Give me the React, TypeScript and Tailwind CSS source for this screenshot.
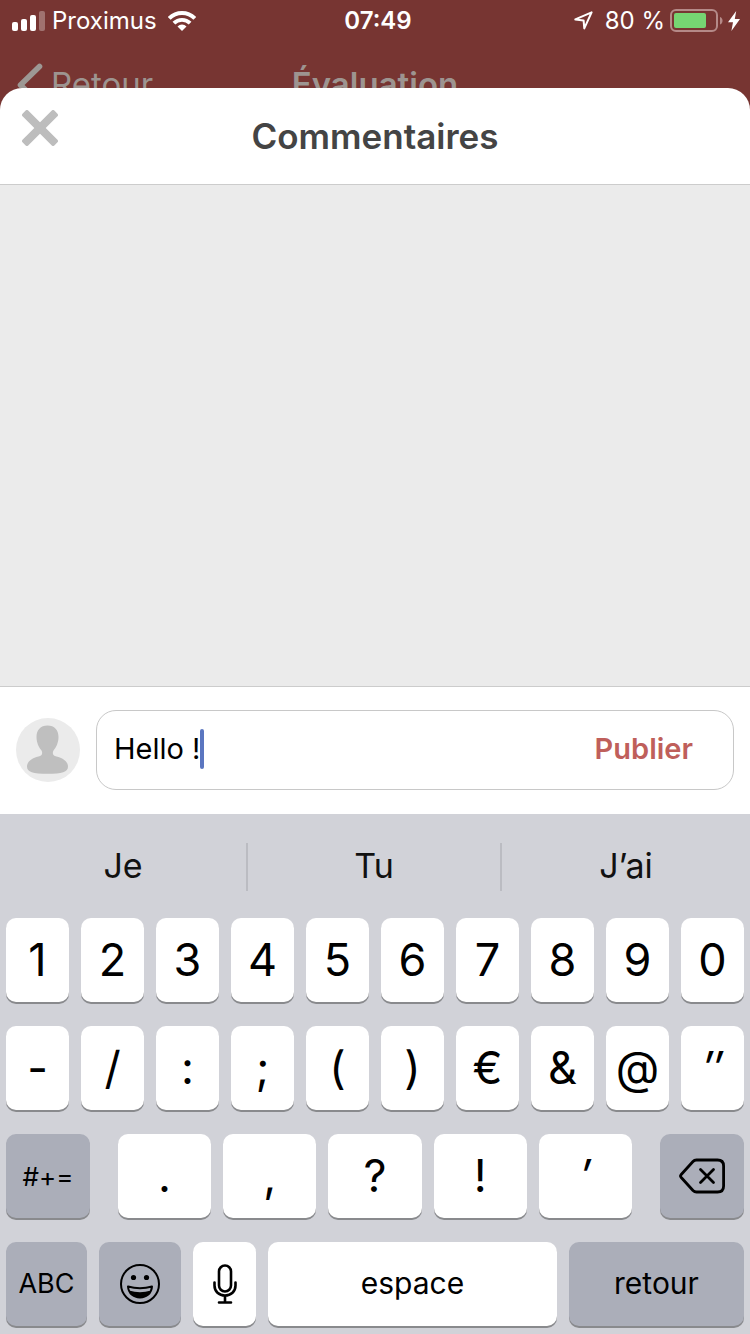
import { useState } from "react";
import type { ReactNode } from "react";

const NUMBER_ROW = ["1", "2", "3", "4", "5", "6", "7", "8", "9", "0"];
const SYMBOL_ROW = ["-", "/", ":", ";", "(", ")", "€", "&", "@", "″"];
const PUNCTUATION_ROW = [".", ",", "?", "!", "′"];
const SUGGESTIONS = ["Je", "Tu", "J’ai"];
const SLANTED = ["″", "′"];

function SignalIcon() {
  return (
    <svg width="33" height="20" viewBox="0 0 33 20" fill="white" aria-hidden="true">
      <rect x="0" y="11" width="6" height="9" rx="2" />
      <rect x="9" y="8" width="6" height="12" rx="2" />
      <rect x="18" y="4" width="6" height="16" rx="2" />
      <rect x="27" y="0" width="6" height="20" rx="2" opacity="0.3" />
    </svg>
  );
}

function WifiIcon() {
  return (
    <svg width="28" height="20" viewBox="0 0 28 20" fill="none" stroke="white" aria-hidden="true">
      <path d="M1.200 7.400a18 18 0 0 1 25.600 0" strokeWidth="4" />
      <path d="M5.900 12.200a11.400 11.400 0 0 1 16.200 0" strokeWidth="3.800" />
      <path d="M14 20l-4.500-4.500a6.200 6.200 0 0 1 9 0z" fill="white" stroke="none" />
    </svg>
  );
}

function LocationIcon() {
  return (
    <svg width="19" height="19" viewBox="0 0 19 19" fill="none" stroke="white" strokeWidth="2" strokeLinejoin="round" aria-hidden="true">
      <path d="M17.600 1.300L10.300 17.400 9.600 9.400 1.300 8.400z" />
    </svg>
  );
}

function BatteryIcon() {
  return (
    <svg width="53" height="24" viewBox="0 0 53 24" fill="none" aria-hidden="true">
      <rect x="1" y="1" width="46" height="21" rx="5" stroke="#b58a88" strokeWidth="2" />
      <rect x="4" y="4" width="32" height="15" rx="2" fill="#76d572" />
      <path d="M50 8c3.400 1 3.400 6.500 0 7.500z" fill="#b58a88" />
    </svg>
  );
}

function BoltIcon() {
  return (
    <svg width="12" height="20" viewBox="0 0 12 20" fill="white" aria-hidden="true">
      <path d="M8.200 0L0 11.300h5L3.400 20 12 8H6.800z" />
    </svg>
  );
}

function BackIcon() {
  return (
    <svg width="26" height="44" viewBox="0 0 26 44" fill="none" stroke="#9d9894" strokeWidth="5.600" strokeLinecap="round" strokeLinejoin="round" aria-hidden="true">
      <path d="M22.500 3.500L3.500 22l19 18.500" />
    </svg>
  );
}

function CloseIcon() {
  return (
    <svg width="36" height="36" viewBox="0 0 36 36" fill="#bdbdbd" aria-hidden="true">
      <rect x="-4.500" y="14" width="45" height="8" rx="1.800" transform="rotate(45 18 18)" />
      <rect x="-4.500" y="14" width="45" height="8" rx="1.800" transform="rotate(-45 18 18)" />
    </svg>
  );
}

function Avatar() {
  return (
    <svg className="shrink-0" width="64" height="64" viewBox="0 0 64 64" role="img" aria-label="Profil">
      <circle cx="32" cy="32" r="32" fill="#ebebeb" />
      <path
        fill="#bfbfbf"
        d="M31.500 7.500c7 0 11 4.500 11 11.500 0 6-2.500 10.500-5 13.500-1.500 3-.500 5 3 6 7 1.500 11.500 5.500 11.500 10 0 5.500-6 7.300-20.500 7.300S11 54 11 48.500c0-4.500 4.500-8.500 11.500-10 3.500-1 4.500-3 3-6-2.500-3-5-7.500-5-13.500 0-7 4-11.500 11-11.500z"
      />
    </svg>
  );
}

function BackspaceIcon() {
  return (
    <svg width="46" height="36" viewBox="0 0 46 36" fill="none" stroke="black" strokeWidth="2.800" strokeLinecap="round" strokeLinejoin="round" aria-hidden="true">
      <path d="M17.500 2H38.500Q44.600 2 44.600 8V28Q44.600 34 38.500 34H17.500Q15.500 34 14 32.500L2 19.200Q1 18 2 16.800L14 3.500Q15.300 2 17.500 2z" />
      <path d="M21.500 11.500l13 13M34.500 11.500l-13 13" />
    </svg>
  );
}

function EmojiIcon() {
  return (
    <svg width="40" height="40" viewBox="0 0 40 40" fill="none" stroke="black" strokeWidth="2" aria-hidden="true">
      <circle cx="20" cy="20" r="19" />
      <circle cx="13.500" cy="13.500" r="2.600" fill="black" stroke="none" />
      <circle cx="26.500" cy="13.500" r="2.600" fill="black" stroke="none" />
      <path d="M8 22.500Q20 26 32 22.500C31.500 29.500 26.500 33.500 20 33.500S8.500 29.500 8 22.500z" strokeLinejoin="round" />
      <path d="M9 26.500Q20 30 31 26.500C29.500 31.500 25.500 33.500 20 33.500S10.500 31.500 9 26.500z" fill="black" stroke="none" />
    </svg>
  );
}

function MicIcon() {
  return (
    <svg width="24" height="40" viewBox="0 0 24 40" fill="none" stroke="black" strokeWidth="2.600" strokeLinecap="round" aria-hidden="true">
      <rect x="6" y="1.500" width="12" height="26" rx="6" />
      <path d="M1.500 18.500v3c0 6 4.500 10 10.500 10s10.500-4 10.500-10v-3M12 31.500v7M6 38.500h12" />
    </svg>
  );
}

type KeyProps = {
  children: ReactNode;
  label?: string;
  className: string;
  onPress?: () => void;
};

function Key({ children, label, className, onPress }: KeyProps) {
  return (
    <button
      type="button"
      aria-label={label}
      onClick={onPress}
      className={`flex h-[84px] items-center justify-center rounded-[10px] text-black shadow-[0_2px_0_#898a8d] ${className}`}
    >
      {children}
    </button>
  );
}

function CharKey({ char, onPress }: { char: string; onPress: () => void }) {
  return (
    <Key
      className={SLANTED.includes(char) ? "bg-white text-[45px] italic" : "bg-white text-[45px]"}
      onPress={onPress}
    >
      {char}
    </Key>
  );
}

export default function App() {
  const [comment, setComment] = useState("Hello !");
  const append = (text: string) => setComment((current) => current + text);

  return (
    <div className="flex min-h-screen flex-col bg-[#773532] font-['Inter','Liberation_Sans',sans-serif]">
      <header className="flex h-22 flex-col overflow-hidden">
        <div className="grid h-[41px] shrink-0 grid-cols-[1fr_auto_1fr] items-center pr-2.5 pl-3 text-2xl text-white">
          <div className="flex items-center gap-[7px]">
            <SignalIcon />
            <span>Proximus</span>
            <span className="pl-1">
              <WifiIcon />
            </span>
          </div>
          <time className="pl-1 font-semibold">07:49</time>
          <div className="flex items-center justify-end gap-[5px]">
            <LocationIcon />
            <span className="pl-[7px]">80 %</span>
            <BatteryIcon />
            <BoltIcon />
          </div>
        </div>
        <nav className="grid h-22 shrink-0 grid-cols-[1fr_auto_1fr] items-center px-[17px] text-[33px] text-[#9d9490]">
          <a href="#retour" className="flex items-center gap-2">
            <BackIcon />
            Retour
          </a>
          <span className="font-semibold">Évaluation</span>
        </nav>
      </header>

      <main className="flex grow flex-col overflow-hidden rounded-t-[22px] bg-white">
        <div className="grid h-[97px] grid-cols-[1fr_auto_1fr] items-center border-b border-[#cccccc] px-5">
          <button type="button" aria-label="Fermer" className="mb-4 justify-self-start px-0.5">
            <CloseIcon />
          </button>
          <h1 className="text-[35px] font-semibold text-[#444444]">Commentaires</h1>
        </div>
        <div className="grow bg-[#ebebeb]" />
        <form
          className="flex items-center gap-4 border-t border-[#cccccc] px-4 py-6 pt-[23px]"
          onSubmit={(event) => event.preventDefault()}
        >
          <Avatar />
          <div className="flex h-20 grow items-center rounded-[20px] border border-[#c8c8c8] pr-10 pb-0.5 pl-[17px]">
            <input
              type="text"
              aria-label="Commentaire"
              value={comment}
              onChange={(event) => setComment(event.target.value)}
              className="field-sizing-content max-w-[440px] text-[29px] text-black caret-transparent outline-none"
            />
            <span className="h-10 w-1 rounded-full bg-[#5b76c0]" />
            <button type="submit" className="ml-auto text-[29px] font-semibold text-[#bf5f5b]">
              Publier
            </button>
          </div>
        </form>
      </main>

      <section aria-label="Clavier" className="bg-[#d1d2d8] pb-2">
        <div className="grid h-26 grid-cols-[248fr_254fr_248fr] items-center divide-x-2 divide-[#bbbcc2] pt-0.5">
          {SUGGESTIONS.map((word) => (
            <button
              key={word}
              type="button"
              className="flex h-12 items-center justify-center pb-1 text-[34px] text-[#111111]"
              onClick={() => append(word)}
            >
              {word}
            </button>
          ))}
        </div>
        <div className="flex flex-col gap-6 px-1.5">
          <div className="grid grid-cols-10 gap-3">
            {NUMBER_ROW.map((char) => (
              <CharKey key={char} char={char} onPress={() => append(char)} />
            ))}
          </div>
          <div className="grid grid-cols-10 gap-3">
            {SYMBOL_ROW.map((char) => (
              <CharKey key={char} char={char} onPress={() => append(char)} />
            ))}
          </div>
          <div className="flex gap-7">
            <Key className="w-[84px] bg-[#abaeb9] text-[26px]">#+=</Key>
            <div className="grid grow grid-cols-5 gap-3">
              {PUNCTUATION_ROW.map((char) => (
                <CharKey key={char} char={char} onPress={() => append(char)} />
              ))}
            </div>
            <Key
              label="Supprimer"
              className="w-[84px] bg-[#abaeb9]"
              onPress={() => setComment((current) => current.slice(0, -1))}
            >
              <BackspaceIcon />
            </Key>
          </div>
          <div className="flex gap-3">
            <Key className="w-[81px] bg-[#abaeb9] text-[27px]">ABC</Key>
            <Key label="Emoji" className="w-[82px] bg-[#abaeb9]">
              <EmojiIcon />
            </Key>
            <Key label="Dictée" className="w-[63px] bg-white">
              <MicIcon />
            </Key>
            <Key className="grow bg-white pb-0.5 text-[30px]" onPress={() => append(" ")}>
              espace
            </Key>
            <Key className="w-[175px] bg-[#abaeb9] pb-0.5 text-[30px]">retour</Key>
          </div>
        </div>
      </section>
    </div>
  );
}
